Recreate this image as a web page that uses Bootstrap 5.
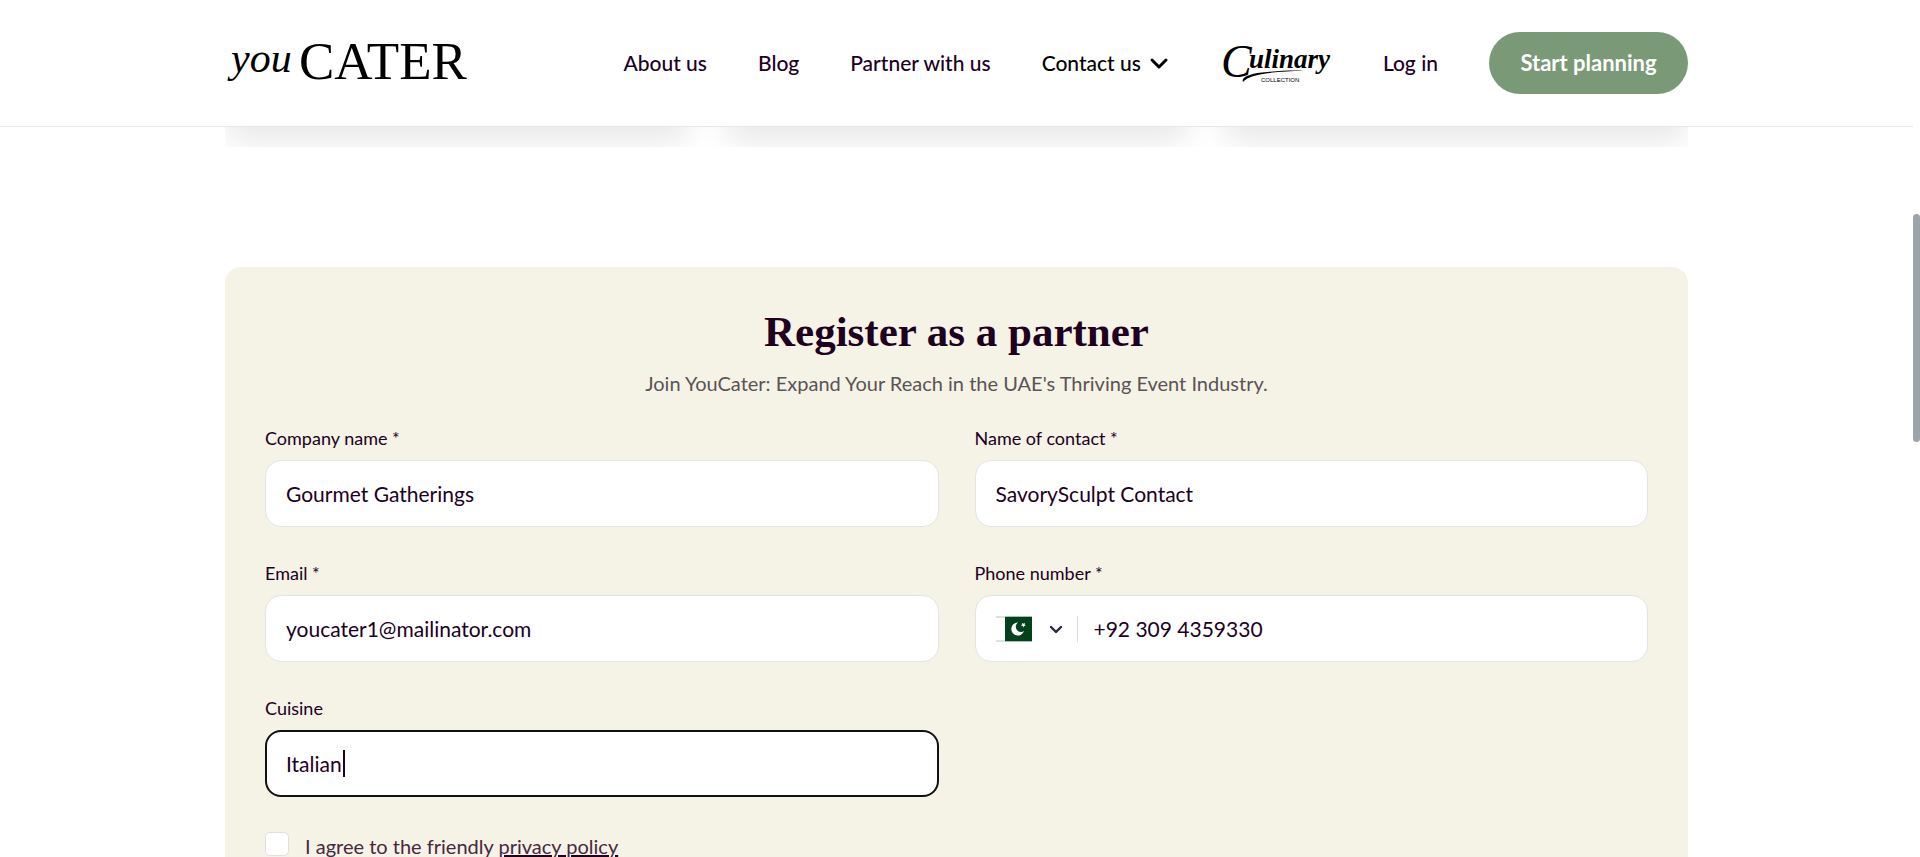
<!DOCTYPE html>
<html lang="en">
<head>
<meta charset="utf-8">
<meta name="viewport" content="width=device-width, initial-scale=1">
<title>youCATER</title>
<link href="https://cdn.jsdelivr.net/npm/bootstrap@5.3.0/dist/css/bootstrap.min.css" rel="stylesheet">
<style>
:root { --ink: #20001f; --sage: #7a9977; --cream: #f5f2e6; --line: #e2e4e5; }
html { overflow: hidden; }
body { font-family: Lato, "Open Sans", sans-serif; font-size: 20px; color: var(--ink); background: #fff; padding-right: 7px; }
.page-wrap { width: 100%; max-width: 1463px; margin: 0 auto; }
.site-header { border-bottom: 1px solid #e5e7eb; padding: 32px 0; z-index: 5; }
.site-header svg { overflow: visible; }
.site-nav { gap: 51px; font-size: 21px; font-weight: 500; line-height: 30px; }
.site-nav a { color: var(--ink); text-decoration: none; white-space: nowrap; }
.site-nav .menu-toggle { background: none; border: 0; padding: 0; color: #000; font-weight: 500; white-space: nowrap; }
.btn-plan { --bs-btn-bg: var(--sage); --bs-btn-color: #fff; --bs-btn-hover-bg: #6b8a68; --bs-btn-hover-color: #fff; font-size: 22px; font-weight: 700; line-height: 30px; padding: 16px 31px; border: 0; min-width: 199px; }
.card-strip { height: 20px; overflow: hidden; }
.card-strip .row { --bs-gutter-x: 34px; height: 0; }
.strip-card { height: 300px; margin-top: -320px; border-radius: 16px; background: #fff; box-shadow: 0 36px 30px rgba(0,0,0,.085); }
.partner-panel { background: var(--cream); border-radius: 16px; margin-top: 120px; padding: 40px 40px 60px; }
.partner-title { font-family: "Liberation Serif", serif; font-weight: 700; font-size: 43px; line-height: 50px; margin: 0; }
.partner-lead { color: #5b5357; line-height: 30px; margin: 11px 0 28px; }
.field-grid { --bs-gutter-x: 36px; --bs-gutter-y: 34px; }
.field-grid label { display: block; font-size: 18px; line-height: 24px; margin-bottom: 10px; }
.field-box, .field-box:focus { height: 67px; border: 1px solid var(--line); border-radius: 16px; padding: 0 20px; font-size: 21px; color: var(--ink); background: #fff; box-shadow: none; }
.field-box.is-active { border: 2px solid #111; padding: 0 19px; caret-color: transparent; }
.text-caret { position: absolute; left: 78px; top: 20px; width: 2px; height: 27px; background: var(--ink); }
.phone-box input { border: 0; outline: 0; background: none; color: inherit; min-width: 0; padding: 0 0 0 16px; }
.country { border-right: 1px solid #d8d5ee; width: 82px; height: 26px; }
.country select { width: 100%; height: 100%; appearance: none; border: 0; background: none; outline: 0; }
.country svg { position: absolute; left: 0; top: 0; pointer-events: none; }
.agree { gap: 16px; margin-top: 35px; line-height: 28px; color: #46293f; }
.agree input { width: 24px; height: 24px; margin: 0; border: 1px solid #dedfe0; border-radius: 6px; background-color: #fff; flex: none; }
.agree a { color: inherit; text-decoration-color: var(--ink); text-decoration-thickness: 2px; }
.scroll-thumb { position: fixed; right: 0; top: 214px; width: 7px; height: 228px; border-radius: 4px; background: #9ca3ab; z-index: 9; }
</style>
</head>
<body>
<header class="site-header bg-white position-relative">
  <div class="page-wrap d-flex justify-content-between align-items-center">
    <a href="#" aria-label="youCATER home">
      <svg class="d-block" width="250" height="50" viewBox="0 0 250 50" font-family="'Liberation Serif', serif" fill="#000">
        <text x="6" y="34" font-size="42" font-style="italic">you</text>
        <text x="74" y="41" font-size="53">CATER</text>
      </svg>
    </a>
    <nav class="site-nav d-flex align-items-center">
      <a href="#">About us</a>
      <a href="#">Blog</a>
      <a href="#">Partner with us</a>
      <button class="menu-toggle d-flex align-items-center gap-2" type="button">Contact us
        <svg width="20" height="20" viewBox="0 0 20 20" fill="none" stroke="#000" stroke-width="3" stroke-linecap="round" stroke-linejoin="round"><path d="M3 7l7 7 7-7"/></svg>
      </button>
      <a href="#" aria-label="Culinary Collection">
        <svg class="d-block" width="112" height="42" viewBox="0 0 112 42" fill="#000">
          <text x="1" y="35" font-family="'Liberation Serif', serif" font-style="italic"><tspan font-size="46">C</tspan><tspan x="29" y="26" font-size="27" font-weight="700">ulinary</tspan></text>
          <path d="M23 40c-2-4 5-8 19-9.500 18-2 34-2.500 41-1.500-14 0-31 1-43 3.500-9 2-14 4-17 7.500z"/>
          <text x="41" y="40" font-family="'Liberation Sans', sans-serif" font-size="6">COLLECTION</text>
        </svg>
      </a>
      <a href="#">Log in</a>
      <button class="btn btn-plan rounded-pill" type="button">Start planning</button>
    </nav>
  </div>
</header>

<main>
  <div class="page-wrap card-strip" aria-hidden="true">
    <div class="row">
      <div class="col-4"><div class="strip-card"></div></div>
      <div class="col-4"><div class="strip-card"></div></div>
      <div class="col-4"><div class="strip-card"></div></div>
    </div>
  </div>

  <section class="page-wrap partner-panel">
    <h2 class="partner-title text-center">Register as a partner</h2>
    <p class="partner-lead text-center">Join YouCater: Expand Your Reach in the UAE's Thriving Event Industry.</p>
    <form>
      <div class="row field-grid">
        <div class="col-6">
          <label for="company">Company name *</label>
          <input class="form-control field-box" id="company" type="text" value="Gourmet Gatherings">
        </div>
        <div class="col-6">
          <label for="contact">Name of contact *</label>
          <input class="form-control field-box" id="contact" type="text" value="SavorySculpt Contact">
        </div>
        <div class="col-6">
          <label for="email">Email *</label>
          <input class="form-control field-box" id="email" type="email" value="youcater1@mailinator.com">
        </div>
        <div class="col-6">
          <label for="phone">Phone number *</label>
          <div class="field-box phone-box d-flex align-items-center">
            <div class="country position-relative">
              <select aria-label="Country"><option value="PK" aria-label="Pakistan"></option></select>
              <svg width="70" height="26" viewBox="0 0 70 26">
                <path d="M0 0h36v2H0zM0 24h36v2H0z" fill="#dfe3e0"/>
                <path d="M9 1h27v24H9z" fill="#01411c"/>
                <path d="M9 0h27v1H9zM9 25h27v1H9z" fill="#a9bdb0"/>
                <path d="M22 6.500a6.500 6.500 0 1 0 6 8.500a5.200 5.200 0 1 1-6-8.500z" fill="#fff"/>
                <path d="M26 7l1.500.700 1.300-1-.2 1.700 1.200 1.200-1.700.3-.8 1.500-.7-1.600-1.700-.3 1.300-1.100z" fill="#fff"/>
                <path d="M55 11l5 5 5-5" fill="none" stroke="#2b2440" stroke-width="2.400" stroke-linecap="round" stroke-linejoin="round"/>
              </svg>
            </div>
            <input class="flex-grow-1" id="phone" type="tel" value="+92 309 4359330">
          </div>
        </div>
        <div class="col-6">
          <label for="cuisine">Cuisine</label>
          <div class="position-relative">
            <input class="form-control field-box is-active" id="cuisine" type="text" value="Italian">
            <span class="text-caret" aria-hidden="true"></span>
          </div>
        </div>
      </div>
      <div class="agree d-flex align-items-start">
        <input class="form-check-input" type="checkbox" id="agree">
        <label for="agree">I agree to the friendly <a href="#">privacy policy</a></label>
      </div>
    </form>
  </section>
</main>
<div class="scroll-thumb" aria-hidden="true"></div>
</body>
</html>
